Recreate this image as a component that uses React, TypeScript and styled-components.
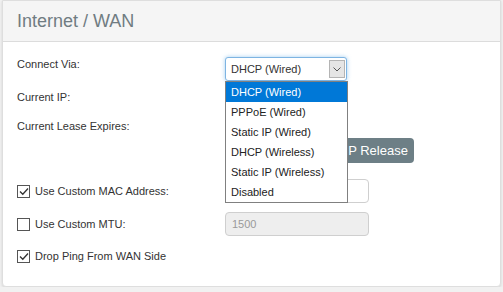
import React from "react";
import styled, { createGlobalStyle } from "styled-components";

const GlobalStyle = createGlobalStyle`
  html, body {
    margin: 0;
    padding: 0;
    background: #f1f1f1;
    font-family: "Liberation Sans", Arial, sans-serif;
  }
`;

const Panel = styled.section`
  width: 497px;
  margin: 0 2px;
  background: #fff;
  border: 1px solid #dedede;
  border-radius: 0 0 4px 4px;
  box-shadow: 0 1px 3px rgba(0, 0, 0, 0.12);
`;

const Header = styled.header`
  height: 40px;
  line-height: 40px;
  padding-left: 14px;
  background: #f5f5f5;
  border-bottom: 1px solid #dcdcdc;
  color: #707c82;
  font-size: 18px;
`;

const Body = styled.div`
  padding: 15px 0 23px 14px;
`;

const Row = styled.div<{ $mt?: number; $h: number; $top?: boolean }>`
  display: flex;
  align-items: ${(p) => (p.$top ? "flex-start" : "center")};
  height: ${(p) => p.$h}px;
  margin-top: ${(p) => p.$mt ?? 0}px;
`;

const Label = styled.div`
  width: 208px;
  font-size: 11px;
  line-height: 14px;
  color: #333;
`;

const CheckLabel = styled.label`
  display: flex;
  align-items: center;
  width: 208px;
  font-size: 11px;
  line-height: 14px;
  color: #333;
`;

const Box = styled.span`
  display: inline-flex;
  align-items: center;
  justify-content: center;
  width: 11px;
  height: 11px;
  border: 1px solid #555;
  background: #fff;
  margin-right: 5px;
`;

const Control = styled.div`
  position: relative;
`;

const Select = styled.div`
  position: relative;
  width: 120px;
  height: 22px;
  border: 1px solid #7eb4e2;
  border-radius: 3px;
  box-shadow: 0 0 4px rgba(102, 175, 233, 0.6);
  background: #fff;
  font-size: 11px;
  line-height: 22px;
  color: #333;
  padding-left: 0;
  display: flex;
`;

const SelectText = styled.span`
  flex: 1;
  padding-left: 5px;
`;

const Arrow = styled.span`
  width: 16px;
  height: 18px;
  margin: 2px 1px 0 0;
  background: #e5e5e5;
  border: 1px solid #b4b4b4;
  display: flex;
  align-items: center;
  justify-content: center;
  box-sizing: border-box;
`;

const List = styled.ul`
  position: absolute;
  top: 24px;
  left: 0;
  z-index: 5;
  width: 121px;
  margin: 0;
  padding: 0;
  list-style: none;
  background: #fff;
  border: 1px solid #808080;
`;

const Option = styled.li<{ $active?: boolean }>`
  height: 20px;
  line-height: 20px;
  padding-left: 5px;
  font-size: 11px;
  color: ${(p) => (p.$active ? "#fff" : "#222")};
  background: ${(p) => (p.$active ? "#0078d7" : "#fff")};
`;

const Button = styled.button`
  height: 25px;
  margin-left: 87px;
  padding: 0 6px 0 8px;
  border: none;
  border-radius: 4px;
  background: #6d7f86;
  color: #fff;
  font-family: "Liberation Sans", Arial, sans-serif;
  font-size: 13px;
`;

const Input = styled.div<{ $disabled?: boolean }>`
  width: 136px;
  height: 22px;
  padding-left: 6px;
  border: 1px solid #cfcfcf;
  border-radius: 4px;
  background: ${(p) => (p.$disabled ? "#eeeeee" : "#fff")};
  color: #9a9a9a;
  font-size: 11px;
  line-height: 22px;
`;

const options = [
  "DHCP (Wired)",
  "PPPoE (Wired)",
  "Static IP (Wired)",
  "DHCP (Wireless)",
  "Static IP (Wireless)",
  "Disabled",
];

function Check({ on }: { on?: boolean }) {
  return (
    <Box>
      {on && (
        <svg width="10" height="9" viewBox="0 0 10 9">
          <path d="M1 4.5 L3.8 7.3 L9 1.5" fill="none" stroke="#333" strokeWidth="1.3" />
        </svg>
      )}
    </Box>
  );
}

export default function App() {
  return (
    <>
      <GlobalStyle />
      <Panel>
        <Header>Internet / WAN</Header>
        <Body>
          <Row $h={24} $top>
            <Label>Connect Via:</Label>
            <Control>
              <Select>
                <SelectText>DHCP (Wired)</SelectText>
                <Arrow>
                  <svg width="8" height="5" viewBox="0 0 8 5">
                    <path d="M0.5 0.5 L4 4 L7.5 0.5" fill="none" stroke="#555" strokeWidth="1" />
                  </svg>
                </Arrow>
              </Select>
              <List>
                {options.map((o, i) => (
                  <Option key={o} $active={i === 0}>
                    {o}
                  </Option>
                ))}
              </List>
            </Control>
          </Row>
          <Row $h={14} $mt={9}>
            <Label>Current IP:</Label>
          </Row>
          <Row $h={14} $mt={15}>
            <Label>Current Lease Expires:</Label>
          </Row>
          <Row $h={25} $mt={5}>
            <Label />
            <Button>DHCP Release</Button>
          </Row>
          <Row $h={24} $mt={16}>
            <CheckLabel>
              <Check on />
              Use Custom MAC Address:
            </CheckLabel>
            <Input />
          </Row>
          <Row $h={24} $mt={9}>
            <CheckLabel>
              <Check />
              Use Custom MTU:
            </CheckLabel>
            <Input $disabled>1500</Input>
          </Row>
          <Row $h={14} $mt={13}>
            <CheckLabel>
              <Check on />
              Drop Ping From WAN Side
            </CheckLabel>
          </Row>
        </Body>
      </Panel>
    </>
  );
}
